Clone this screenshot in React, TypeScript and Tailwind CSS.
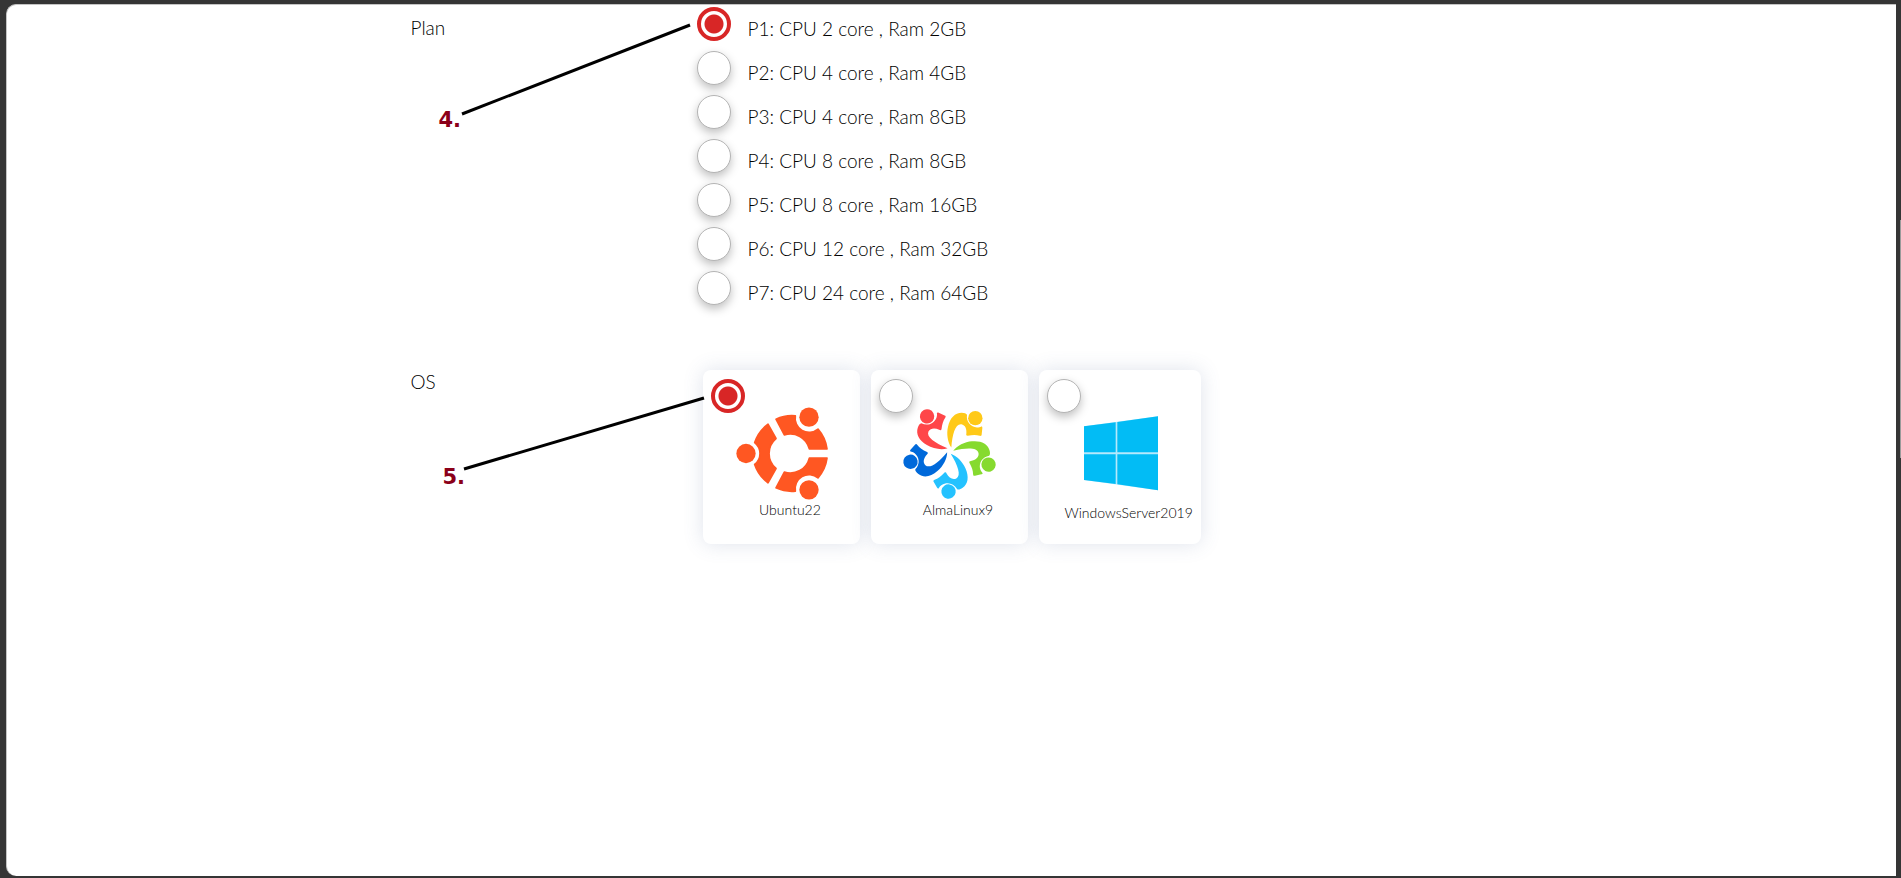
import { useState, type ReactNode } from "react";

const plans = [
  "P1: CPU 2 core , Ram 2GB",
  "P2: CPU 4 core , Ram 4GB",
  "P3: CPU 4 core , Ram 8GB",
  "P4: CPU 8 core , Ram 8GB",
  "P5: CPU 8 core , Ram 16GB",
  "P6: CPU 12 core , Ram 32GB",
  "P7: CPU 24 core , Ram 64GB",
];

const radioClass =
  "size-[34px] shrink-0 cursor-pointer appearance-none rounded-full border border-[#b4b4b4] bg-white shadow-[0_4px_10px_rgba(0,0,0,0.25)] checked:border-4 checked:border-[#d82626] checked:bg-[radial-gradient(circle,#d82626_9px,#ffffff_10px)] checked:shadow-none";

function UbuntuLogo() {
  const segment =
    "M258 191 A113 113 0 0 1 316 181 A42 42 0 0 0 384 221 A113 113 0 0 1 411 280 L358 280 A59 59 0 0 0 283 238 Z";
  return (
    <svg viewBox="138 155 276 278" className="block h-[93px] w-[92px]" aria-hidden="true">
      <g fill="#ff5722" stroke="#ff5722" strokeWidth="5" strokeLinejoin="round">
        <path d={segment} />
        <path d={segment} transform="translate(0 588) scale(1 -1)" />
        <path d="M234 206 A113 113 0 0 0 194 261 A42 42 0 0 1 194 327 A113 113 0 0 0 234 382 L258 339 A59 59 0 0 1 258 249 Z" />
      </g>
      <g fill="#ff5722">
        <circle cx="168" cy="294" r="29" />
        <circle cx="357" cy="185" r="29" />
        <circle cx="357" cy="403" r="29" />
      </g>
    </svg>
  );
}

const almaColors = ["#ffc918", "#86da2f", "#24c2ff", "#0069da", "#ff4649"];

function AlmaLogo() {
  return (
    <svg viewBox="119 156 276 278" className="block h-[93px] w-[92px] overflow-visible" aria-hidden="true">
      {almaColors.map((color, i) => (
        <g key={color} fill={color} transform={`rotate(${i * 72} 257 286)`}>
          <circle cx="333" cy="189" r="21.5" />
          <path d="M261 277 C250 262 246 236 251 215 C257 188 272 173 292 173 C300 173 306 175 308 179 C305 200 319 216 338 217 C343 217 348 216 351 214 C354 214 354 216 354 219 L352 238 C352 242 350 243 346 242 C336 239 325 239 310 242 C306 242 305 240 306 236 C308 222 303 209 291 207 C273 205 264 236 261 277 Z" />
        </g>
      ))}
    </svg>
  );
}

function WindowsLogo() {
  return (
    <svg viewBox="138 155 276 278" preserveAspectRatio="xMidYMin meet" className="block h-24 w-[92px]" aria-hidden="true">
      <path fill="#b5e9fc" d="M165 213 L387 183 V405 L165 374 Z" />
      <path
        fill="#02bcf5"
        d="M165 213 L260 201 V291 H165 Z M265 200 L387 183 V291 H265 Z M165 297 H260 V386 L165 374 Z M265 297 H387 V405 L265 387 Z"
      />
    </svg>
  );
}

const systems: { name: string; logo: ReactNode; width: string }[] = [
  { name: "Ubuntu22", logo: <UbuntuLogo />, width: "min-w-[157px]" },
  { name: "AlmaLinux9", logo: <AlmaLogo />, width: "min-w-[157px]" },
  { name: "WindowsServer2019", logo: <WindowsLogo />, width: "min-w-[161px]" },
];

function Callout({ label, className, lineClass, line }: { label: string; className: string; lineClass: string; line: [number, number, number, number] }) {
  const [x1, y1, x2, y2] = line;
  return (
    <>
      <span className={`absolute font-['DejaVu_Sans',sans-serif] text-[21px] leading-6 font-bold text-[#8b0019] ${className}`}>
        {label}
      </span>
      <svg className={`pointer-events-none absolute h-24 w-64 overflow-visible ${lineClass}`} aria-hidden="true">
        <line x1={x1} y1={y1} x2={x2} y2={y2} stroke="#000" strokeWidth="3" />
      </svg>
    </>
  );
}

export default function App() {
  const [plan, setPlan] = useState(plans[0]);
  const [os, setOs] = useState(systems[0].name);

  return (
    <div className="relative flex min-h-screen bg-[#353535] pt-1 pr-[5px] pb-[2px] pl-[6px] font-['Lato',sans-serif] text-[19px] font-light text-black">
      <main className="flex-1 rounded-l-[10px] border-t border-l border-[#c4c4c4] bg-white">
        <div className="mx-auto w-full max-w-[1082px]">
          <section className="relative grid grid-cols-[286px_1fr]" aria-labelledby="plan-heading">
            <h2 id="plan-heading" className="pt-[11px] leading-6">Plan</h2>
            <div role="radiogroup" aria-labelledby="plan-heading" className="flex flex-col gap-[10px] pt-[2px]">
              {plans.map((p) => (
                <label key={p} className="flex h-[34px] w-fit cursor-pointer gap-[17px]">
                  <input type="radio" name="plan" checked={plan === p} onChange={() => setPlan(p)} className={radioClass} />
                  <span className="pt-[10px] leading-6">{p}</span>
                </label>
              ))}
            </div>
            <Callout label="4." className="top-[103px] left-7" lineClass="top-5 left-12" line={[3, 89, 231, 0]} />
          </section>

          <section className="relative mt-[65px] grid grid-cols-[286px_1fr]" aria-labelledby="os-heading">
            <h2 id="os-heading" className="leading-6">OS</h2>
            <div role="radiogroup" aria-labelledby="os-heading" className="flex gap-[11px] pl-[6px]">
              {systems.map(({ name, logo, width }) => (
                <label
                  key={name}
                  className={`relative flex h-[174px] cursor-pointer flex-col items-center rounded-lg bg-white pt-[37px] pr-2 pl-[10px] shadow-[0_0_20px_rgba(80,100,150,0.18)] ${width}`}
                >
                  <input
                    type="radio"
                    name="os"
                    checked={os === name}
                    onChange={() => setOs(name)}
                    className={`absolute top-[9px] left-2 ${radioClass}`}
                  />
                  <span className="pointer-events-none relative">{logo}</span>
                  <span className="pl-4 text-sm leading-5">{name}</span>
                </label>
              ))}
            </div>
            <Callout label="5." className="top-[95px] left-8" lineClass="top-7 left-12" line={[5, 71, 245, 0]} />
          </section>
        </div>
      </main>
      <div className="absolute top-[220px] right-0 h-[238px] w-px bg-[#9a9a9a]" />
    </div>
  );
}
